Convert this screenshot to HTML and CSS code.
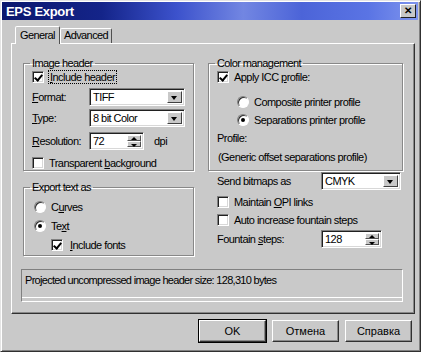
FILE: index.html
```html
<!DOCTYPE html>
<html lang="en">
<head>
  <meta charset="UTF-8">
  <title>EPS Export</title>
  <link rel="stylesheet" href="styles.css">
</head>
<body>
  <div class="window">
    <div class="titlebar">
      <span class="title">EPS Export</span>
      <span class="close">&#x2715;</span>
    </div>

    <div class="tabs">
      <div class="tab active">General</div>
      <div class="tab">Advanced</div>
    </div>

    <div class="panel">
      <div class="columns">
        <div class="col">
          <fieldset class="group group-header">
            <legend>Image header</legend>
            <div class="row check-row first">
              <span class="check on"></span>
              <span class="focus"><u>I</u>nclude header</span>
            </div>
            <div class="row field-row">
              <span class="lbl"><u>F</u>ormat:</span>
              <div class="combo wide"><span class="val">TIFF</span><span class="drop"></span></div>
            </div>
            <div class="row field-row r3">
              <span class="lbl"><u>T</u>ype:</span>
              <div class="combo wide"><span class="val">8 bit Color</span><span class="drop"></span></div>
            </div>
            <div class="row field-row r4">
              <span class="lbl"><u>R</u>esolution:</span>
              <div class="spin small"><span class="val">72</span><span class="arrows"><i class="up"></i><i class="down"></i></span></div>
              <span class="unit">dpi</span>
            </div>
            <div class="row check-row r5">
              <span class="check"></span>
              <span>Transparent <u>b</u>ackground</span>
            </div>
          </fieldset>

          <fieldset class="group group-text">
            <legend>Export text as</legend>
            <div class="row radio-row first">
              <span class="radio"></span>
              <span>C<u>u</u>rves</span>
            </div>
            <div class="row radio-row">
              <span class="radio on"></span>
              <span>Te<u>x</u>t</span>
            </div>
            <div class="row check-row indent">
              <span class="check on"></span>
              <span><u>I</u>nclude fonts</span>
            </div>
          </fieldset>
        </div>

        <div class="col">
          <fieldset class="group group-color">
            <legend>Color management</legend>
            <div class="row check-row first">
              <span class="check on"></span>
              <span>Apply ICC <u>p</u>rofile:</span>
            </div>
            <div class="row radio-row sub first-sub">
              <span class="radio"></span>
              <span>Composite printer profile</span>
            </div>
            <div class="row radio-row sub">
              <span class="radio on"></span>
              <span>Separations printer profile</span>
            </div>
            <div class="row text-row">Profile:</div>
            <div class="row text-row last">(Generic offset separations profile)</div>
          </fieldset>

          <div class="loose">
            <div class="row field-row">
              <span class="lbl long">Send bitmaps as</span>
              <div class="combo mid"><span class="val">CMYK</span><span class="drop"></span></div>
            </div>
            <div class="row check-row">
              <span class="check"></span>
              <span>Maintain <u>O</u>PI links</span>
            </div>
            <div class="row check-row">
              <span class="check"></span>
              <span>Auto increase fountain steps</span>
            </div>
            <div class="row field-row steps">
              <span class="lbl long">Fountain <u>s</u>teps:</span>
              <div class="spin med"><span class="val">128</span><span class="arrows"><i class="up"></i><i class="down"></i></span></div>
            </div>
          </div>
        </div>
      </div>

      <div class="status">Projected uncompressed image header size: 128,310 bytes</div>
    </div>

    <div class="buttons">
      <button class="btn default">OK</button>
      <button class="btn">Отмена</button>
      <button class="btn">Справка</button>
    </div>
  </div>
</body>
</html>
```

FILE: styles.css
```css
* {
  box-sizing: border-box;
}

body {
  margin: 0;
  padding: 0;
  background: #c8c8c8;
  font-family: 'Liberation Sans', Arial, sans-serif;
  font-size: 11px;
  color: #000;
}

u {
  text-decoration: underline;
  text-underline-offset: 1px;
}

.window {
  width: 421px;
  height: 352px;
  background: #c9c9c9;
  border: 1px solid;
  border-color: #e4e4e4 #303030 #303030 #e4e4e4;
  box-shadow: inset 1px 1px 0 #fff, inset -1px -1px 0 #808080;
  padding: 1px 2px 0 1px;
}

.titlebar {
  height: 18px;
  display: flex;
  align-items: center;
  justify-content: space-between;
  padding: 0 2px 0 4px;
  background: linear-gradient(to right, #0b176e 0%, #142489 24%, #3c52cc 42%, #7286e2 58%, #4c64d8 72%, #5a74e4 88%, #7e94ee 100%);
}

.title {
  color: #fff;
  font-weight: bold;
  font-size: 13px;
  letter-spacing: -0.3px;
}

.close {
  width: 16px;
  height: 14px;
  background: #c8c8c8;
  border: 1px solid;
  border-color: #fff #202020 #202020 #fff;
  font-size: 10px;
  font-weight: bold;
  line-height: 12px;
  text-align: center;
  color: #000;
}

.tabs {
  display: flex;
  align-items: flex-end;
  height: 23px;
  padding-left: 13px;
}

.tab {
  height: 15px;
  padding: 0 3px;
  border: 1px solid;
  border-bottom: none;
  border-color: #fff #505050 transparent #fff;
  border-radius: 2px 2px 0 0;
  line-height: 13px;
  letter-spacing: -0.6px;
}

.tab.active {
  height: 18px;
  padding: 2px 4px 0 4px;
  margin-bottom: -1px;
  background: #c9c9c9;
  position: relative;
  z-index: 1;
}

.panel {
  width: 404px;
  height: 271px;
  margin-left: 9px;
  border: 1px solid;
  border-color: #fff #303030 #303030 #fff;
  box-shadow: inset -1px -1px 0 #888;
  padding: 13px 11px 0 11px;
}

.columns {
  display: grid;
  grid-template-columns: 171px 195px;
  column-gap: 14px;
}

.col {
  display: flex;
  flex-direction: column;
}

.group {
  margin: 0;
  padding: 0 8px 0 8px;
  border: 1px solid #888;
  box-shadow: 1px 1px 0 #fff, inset 1px 1px 0 #fff;
  min-width: 0;
}

.group legend {
  padding: 0 2px;
  margin-left: -2px;
  line-height: 13px;
  letter-spacing: -0.6px;
}

.group-header {
  height: 114px;
}

.group-text {
  height: 75px;
  margin-top: 10px;
}

.group-color {
  height: 114px;
}

.row {
  display: flex;
  align-items: center;
  letter-spacing: -0.55px;
  white-space: nowrap;
}

.check-row,
.radio-row,
.text-row {
  height: 13px;
  gap: 5px;
}

.field-row {
  height: 18px;
  margin-top: 5px;
}

.group-header .r3 {
  margin-top: 3px;
}

.group-header .r4 {
  margin-top: 5px;
}

.group-header .r5 {
  margin-top: 6px;
}

.group-text .first {
  margin-top: 4px;
  padding-left: 2px;
}

.group-text .radio-row {
  margin-top: 6px;
  padding-left: 2px;
}

.group-text .indent {
  margin-top: 6px;
  padding-left: 19px;
  gap: 7px;
}

.group-color .sub {
  padding-left: 20px;
  margin-top: 5px;
}

.group-color .first-sub {
  margin-top: 12px;
}

.group-color .text-row {
  margin-top: 5px;
}

.group-color .last {
  margin-top: 6px;
  padding-left: 1px;
}

.check {
  width: 12px;
  height: 12px;
  flex: none;
  background: #fff;
  border: 1px solid;
  border-color: #808080 #fff #fff #808080;
  box-shadow: inset 1px 1px 0 #202020, inset -1px -1px 0 #d8d8d8;
  position: relative;
}

.check.on::after {
  content: "";
  position: absolute;
  left: 3px;
  top: 1px;
  width: 3px;
  height: 6px;
  border: solid #000;
  border-width: 0 2px 2px 0;
  transform: rotate(40deg);
}

.radio {
  width: 12px;
  height: 12px;
  flex: none;
  border-radius: 50%;
  background: #fff;
  border: 1px solid;
  border-color: #808080 #fff #fff #808080;
  box-shadow: inset 1px 1px 0 #303030;
  position: relative;
}

.radio.on::after {
  content: "";
  position: absolute;
  left: 3px;
  top: 3px;
  width: 4px;
  height: 4px;
  border-radius: 50%;
  background: #000;
}

.focus {
  outline: 1px dotted #000;
  outline-offset: 0;
  padding: 0 1px;
}

.lbl {
  width: 57px;
  flex: none;
}

.lbl.long {
  width: 104px;
}

.combo,
.spin {
  display: flex;
  height: 18px;
  background: #fff;
  border: 1px solid;
  border-color: #808080 #fff #fff #808080;
  box-shadow: inset 1px 1px 0 #202020, inset -1px -1px 0 #d8d8d8;
  padding: 2px;
}

.combo.wide {
  width: 96px;
}

.combo.mid {
  width: 80px;
}

.spin.small {
  width: 55px;
}

.spin.med {
  width: 61px;
}

.val {
  flex: 1;
  line-height: 12px;
  padding-left: 1px;
}

.drop {
  width: 15px;
  flex: none;
  background: #c8c8c8;
  border: 1px solid;
  border-color: #fff #404040 #404040 #fff;
  position: relative;
}

.drop::after {
  content: "";
  position: absolute;
  left: 3px;
  top: 4px;
  border-left: 3.5px solid transparent;
  border-right: 3.5px solid transparent;
  border-top: 4px solid #000;
}

.arrows {
  width: 14px;
  flex: none;
  display: flex;
  flex-direction: column;
}

.arrows i {
  flex: 1;
  background: #c8c8c8;
  border: 1px solid;
  border-color: #fff #505050 #505050 #fff;
  position: relative;
}

.arrows i::after {
  content: "";
  position: absolute;
  left: 3px;
  border-left: 3px solid transparent;
  border-right: 3px solid transparent;
}

.arrows .up::after {
  top: 1px;
  border-bottom: 3px solid #000;
}

.arrows .down::after {
  top: 2px;
  border-top: 3px solid #000;
}

.unit {
  margin-left: 10px;
}

.loose {
  display: flex;
  flex-direction: column;
  padding-left: 9px;
}

.loose .field-row {
  margin-top: 1px;
}

.loose .check-row {
  margin-top: 5px;
}

.loose .steps {
  margin-top: 4px;
}

.status {
  width: 382px;
  height: 33px;
  margin: 13px 0 0 -2px;
  border: 1px solid;
  border-color: #808080 #fff #fff #808080;
  box-shadow: inset 0 -3px 0 #c9c9c9, inset 0 -4px 0 #fff;
  padding: 4px 3px;
  letter-spacing: -0.7px;
  white-space: nowrap;
}

.buttons {
  display: flex;
  justify-content: flex-end;
  gap: 6px;
  padding: 6px 6px 0 0;
}

.btn {
  width: 67px;
  height: 22px;
  background: #c9c9c9;
  border: 1px solid;
  border-color: #fff #303030 #303030 #fff;
  box-shadow: inset -1px -1px 0 #888;
  font-family: 'Liberation Sans', Arial, sans-serif;
  font-size: 11px;
  color: #000;
  padding: 0;
}

.btn.default {
  outline: 1px solid #000;
}
```
